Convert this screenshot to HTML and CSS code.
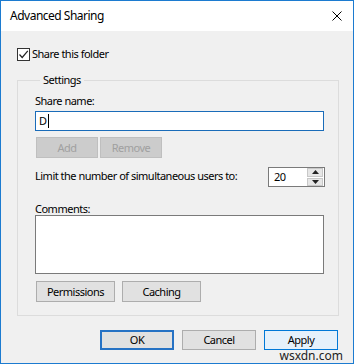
FILE: index.html
```html
<!DOCTYPE html>
<html>
<head>
<meta charset="utf-8">
<link rel="stylesheet" href="styles.css">
</head>
<body>
<div class="window">
  <div class="titlebar">
    <span class="title">Advanced Sharing</span>
    <svg class="close" width="10" height="10" viewBox="0 0 10 10"><path d="M0.5 0.5 L9.5 9.5 M9.5 0.5 L0.5 9.5" stroke="#000" stroke-width="1"/></svg>
  </div>
  <div class="body">
    <div class="check-row">
      <span class="checkbox"><svg width="11" height="11" viewBox="0 0 11 11"><path d="M1.5 5.5 L4.2 8.5 L9.8 1.8" fill="none" stroke="#222" stroke-width="1.2"/></svg></span>
      <span class="check-label">Share this folder</span>
    </div>
    <fieldset class="group">
      <legend class="legend">Settings</legend>
      <div class="label share-label">Share name:</div>
      <div class="input"><span class="input-text">D</span><span class="caret"></span></div>
      <div class="btn-row">
        <span class="btn disabled w62">Add</span>
        <span class="btn disabled w62">Remove</span>
      </div>
      <div class="limit-row">
        <span class="label">Limit the number of simultaneous users to:</span>
        <div class="spin">
          <span class="spin-val">20</span>
          <div class="spin-arrows">
            <span class="arrow up"><svg width="7" height="4" viewBox="0 0 7 4"><path d="M0 4 L3.5 0 L7 4 Z" fill="#222"/></svg></span>
            <span class="arrow down"><svg width="7" height="4" viewBox="0 0 7 4"><path d="M0 0 L3.5 4 L7 0 Z" fill="#222"/></svg></span>
          </div>
        </div>
      </div>
      <div class="label comments-label">Comments:</div>
      <div class="textarea"></div>
      <div class="btn-row2">
        <span class="btn w80">Permissions</span>
        <span class="btn w79">Caching</span>
      </div>
    </fieldset>
    <div class="footer">
      <span class="btn fbtn default">OK</span>
      <span class="btn fbtn">Cancel</span>
      <span class="btn fbtn hover">Apply</span>
    </div>
  </div>
  <span class="watermark">wsxdn.com</span>
</div>
</body>
</html>
```
FILE: styles.css
```css
html, body {
  margin: 0;
  padding: 0;
}
body {
  width: 354px;
  height: 364px;
  font-family: "Noto Sans", "Open Sans", "Liberation Sans", sans-serif;
  font-size: 11px;
  letter-spacing: -0.5px;
  color: #000;
  overflow: hidden;
  white-space: nowrap;
}
.window {
  position: relative;
  width: 354px;
  height: 364px;
  box-sizing: border-box;
  border: 1px solid #1c7bd0;
  background: #f0f0f0;
  display: flex;
  flex-direction: column;
}
.titlebar {
  height: 30px;
  background: #fff;
  display: flex;
  align-items: center;
  justify-content: space-between;
  padding: 0 11px 0 9px;
}
.title {
  font-size: 12px;
  letter-spacing: -0.5px;
  line-height: 16px;
  margin-top: -1px;
}
.close {
  display: block;
  margin-top: -1px;
}
.body {
  flex: 1;
  display: flex;
  flex-direction: column;
  padding-left: 16px;
}
.check-row {
  display: flex;
  align-items: center;
  margin-top: 16px;
  height: 14px;
}
.checkbox {
  width: 11px;
  height: 11px;
  border: 1px solid #333;
  background: #fff;
  display: flex;
  align-items: center;
  justify-content: center;
}
.checkbox svg { display: block; }
.check-label {
  margin-left: 2px;
  line-height: 16px;
}
.group {
  margin: 11px 0 0 0;
  width: 322px;
  box-sizing: border-box;
  height: 244px;
  border: 1px solid #dcdcdc;
  padding: 0 14px 0 17px;
  display: flex;
  flex-direction: column;
}
.legend {
  margin-left: 5px;
  padding: 0 3px;
  line-height: 16px;
}
.label {
  line-height: 16px;
}
.share-label {
  margin-top: 5px;
}
.input {
  margin-top: 2px;
  height: 20px;
  box-sizing: border-box;
  border: 1px solid #1a6cb9;
  background: #fff;
  display: flex;
  align-items: center;
  padding-left: 3px;
}
.input-text { line-height: 16px; }
.caret {
  width: 1px;
  height: 14px;
  background: #000;
  margin-left: 1px;
}
.btn-row {
  display: flex;
  gap: 2px;
  margin-top: 6px;
  padding-left: 1px;
}
.btn {
  height: 21px;
  box-sizing: border-box;
  border: 1px solid #adadad;
  background: #e1e1e1;
  display: flex;
  align-items: center;
  justify-content: center;
  line-height: 16px;
}
.btn.disabled {
  background: #cccccc;
  border-color: #bfbfbf;
  color: #a0a0a0;
}
.w62 { width: 62px; }
.w80 { width: 79px; }
.w79 { width: 79px; }
.limit-row {
  display: flex;
  justify-content: space-between;
  align-items: flex-start;
  margin-top: 9px;
}
.limit-row .label {
  margin-top: 1px;
}
.spin {
  width: 57px;
  height: 20px;
  box-sizing: border-box;
  border: 1px solid #7a7a7a;
  background: #fff;
  display: flex;
  align-items: center;
  justify-content: space-between;
  padding-left: 5px;
  margin-right: -1px;
}
.spin-val { line-height: 16px; }
.spin-arrows {
  width: 16px;
  height: 18px;
  display: flex;
  flex-direction: column;
  gap: 1px;
  margin-right: 1px;
}
.arrow {
  flex: 1;
  background: #e6e6e6;
  border: 1px solid #c8c8c8;
  display: flex;
  align-items: center;
  justify-content: center;
}
.arrow svg { display: block; }
.comments-label {
  margin-top: 14px;
}
.textarea {
  margin-top: -2px;
  height: 59px;
  box-sizing: border-box;
  border: 1px solid #7a7a7a;
  background: #fff;
}
.btn-row2 {
  display: flex;
  gap: 7px;
  margin-top: 7px;
  padding-left: 1px;
}
.footer {
  display: flex;
  justify-content: flex-end;
  gap: 8px;
  margin-top: 14px;
  padding-right: 15px;
}
.fbtn {
  width: 74px;
  height: 20px;
}
.fbtn.default {
  border: 2px solid #2672c4;
}
.fbtn.hover {
  background: #e5f1fb;
  border-color: #0078d7;
}
.watermark {
  position: absolute;
  right: 10px;
  bottom: 0px;
  font-size: 12px;
  letter-spacing: 0;
  line-height: 14px;
  color: #222;
}
```
